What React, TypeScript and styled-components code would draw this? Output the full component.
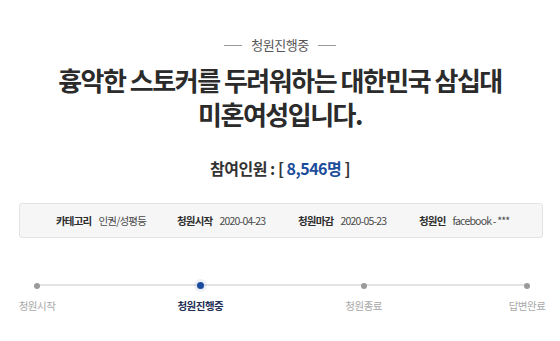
import styled, { createGlobalStyle } from 'styled-components';

const GlobalStyle = createGlobalStyle`
    body {
        margin: 0;
        background: #fff;
        font-family: 'Noto Sans CJK KR', 'Noto Sans', sans-serif;
    }
`;

const Page = styled.main`
    display: flex;
    flex-direction: column;
    align-items: center;
    width: 560px;
    padding-top: 36px;
`;

const StatusLabel = styled.div`
    display: flex;
    align-items: center;
    gap: 9px;
    font-size: 13px;
    line-height: 18px;
    color: #555;
    letter-spacing: -0.5px;

    &::before, &::after {
        content: '';
        width: 18px;
        height: 1px;
        background: #999;
    }
`;

const Title = styled.h1`
    margin: 9px 0 0;
    font-size: 26px;
    line-height: 34px;
    font-weight: 700;
    color: #2b2b2b;
    text-align: center;
    letter-spacing: -1.5px;
`;

const Count = styled.div`
    margin-top: 26px;
    font-size: 16px;
    line-height: 22px;
    font-weight: 700;
    color: #333;
    letter-spacing: -0.5px;
`;

const Number = styled.span`
    color: #1c4d9c;
`;

const InfoBox = styled.div`
    box-sizing: border-box;
    align-self: stretch;
    margin: 24px 17px 0 19px;
    height: 35px;
    display: grid;
    grid-template-columns: repeat(4, 121px);
    align-items: center;
    padding-left: 36px;
    background: #f6f6f6;
    border: 1px solid #e3e3e3;
    border-radius: 3px;
`;

const InfoItem = styled.div`
    display: flex;
    gap: 7px;
    font-size: 10.5px;
    letter-spacing: -0.8px;
    white-space: nowrap;
`;

const InfoLabel = styled.span`
    font-weight: 700;
    color: #2e2e2e;
`;

const InfoValue = styled.span`
    color: #4a4a4a;
`;

const Track = styled.div`
    position: relative;
    align-self: stretch;
    display: flex;
    justify-content: space-between;
    padding: 0 3px 0 7px;
    margin-top: 44px;

    &::before {
        content: '';
        position: absolute;
        top: 2px;
        left: 37px;
        right: 33px;
        height: 2px;
        background: #e4e4e4;
    }
`;

const Step = styled.div`
    position: relative;
    width: 60px;
    display: flex;
    flex-direction: column;
    align-items: center;
    gap: 10px;
`;

const Dot = styled.span<{active?: boolean}>`
    width: ${p => p.active ? 7 : 6}px;
    height: ${p => p.active ? 7 : 6}px;
    margin-top: ${p => p.active ? 0 : 0.5}px;
    border-radius: 50%;
    background: ${p => p.active ? '#1a4b9e' : '#9a9a9a'};
    box-shadow: ${p => p.active ? '0 0 0 3px rgba(26, 75, 158, 0.08)' : 'none'};
`;

const StepLabel = styled.span<{active?: boolean}>`
    font-size: 10.5px;
    line-height: 14px;
    letter-spacing: -0.5px;
    white-space: nowrap;
    font-weight: ${p => p.active ? 700 : 400};
    color: ${p => p.active ? '#1f2f55' : '#a8a8a8'};
`;

const info = [
    ['카테고리', '인권/성평등'],
    ['청원시작', '2020-04-23'],
    ['청원마감', '2020-05-23'],
    ['청원인', 'facebook - ***'],
];

const steps = ['청원시작', '청원진행중', '청원종료', '답변완료'];

const App: React.FC = () => {
    return (
        <>
            <GlobalStyle />
            <Page>
                <StatusLabel>청원진행중</StatusLabel>
                <Title>
                    흉악한 스토커를 두려워하는 대한민국 삼십대<br />
                    미혼여성입니다.
                </Title>
                <Count>참여인원 : [ <Number>8,546명</Number> ]</Count>
                <InfoBox>
                    {info.map(([label, value]) => (
                        <InfoItem key={label}>
                            <InfoLabel>{label}</InfoLabel>
                            <InfoValue>{value}</InfoValue>
                        </InfoItem>
                    ))}
                </InfoBox>
                <Track>
                    {steps.map((s, i) => (
                        <Step key={s}>
                            <Dot active={i === 1} />
                            <StepLabel active={i === 1}>{s}</StepLabel>
                        </Step>
                    ))}
                </Track>
            </Page>
        </>
    );
};

export default App;
